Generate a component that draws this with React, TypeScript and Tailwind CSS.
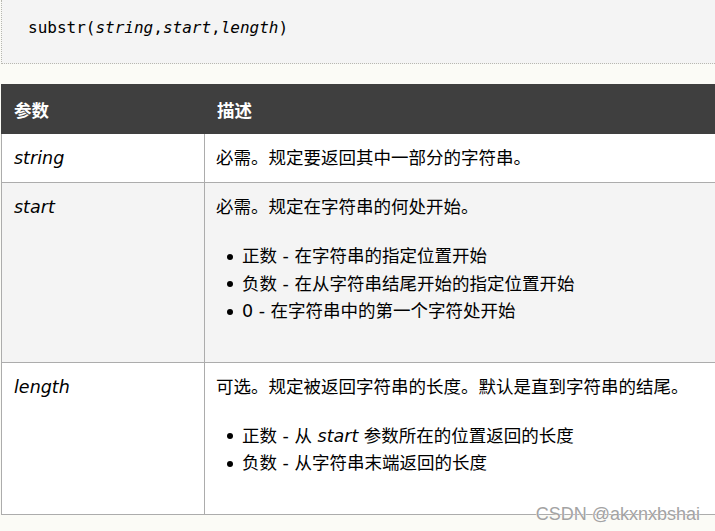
import React from "react";

const FONT = { fontFamily: '"DejaVu Sans", "Noto Sans CJK SC", sans-serif' };

function Bullet({ children }: { children: React.ReactNode }) {
  return (
    <li className="flex items-center leading-[27.5px]">
      <span className="ml-[11px] mr-[9px] h-[6px] w-[6px] shrink-0 rounded-full bg-black" />
      <span>{children}</span>
    </li>
  );
}

export default function App() {
  return (
    <div
      className="relative min-h-[531px] w-[715px] overflow-hidden bg-[#fbfbf6] pl-px text-[17.5px] text-black"
      style={FONT}
    >
      <div
        className="h-[64px] border-b border-l border-dotted border-[#b8b8b0] bg-[#f4f4f4] pl-[26px] pt-[18px] text-[16px] leading-[20px]"
        style={{ fontFamily: '"DejaVu Sans Mono", "Liberation Mono", monospace' }}
      >
        substr(<i>string</i>,<i>start</i>,<i>length</i>)
      </div>

      <div className="mt-[20px]">
        <div className="flex h-[50px] bg-[#3f3f3f] font-bold text-white leading-[27px]">
          <div className="w-[204px] pl-[13px] pt-[14px]">参数</div>
          <div className="flex-1 pl-[12px] pt-[14px]">描述</div>
        </div>

        <div className="flex border-b border-l border-[#acacac] bg-white leading-[27px]">
          <div className="w-[203px] shrink-0 border-r border-[#acacac] pb-[10px] pl-[12px] pt-[11px] italic">
            string
          </div>
          <div className="flex-1 pb-[10px] pl-[11px] pt-[11px]">必需。规定要返回其中一部分的字符串。</div>
        </div>

        <div className="flex border-b border-l border-[#acacac] bg-[#f4f4f4] leading-[27px]">
          <div className="w-[203px] shrink-0 border-r border-[#acacac] pl-[12px] pt-[11px] italic">start</div>
          <div className="flex-1 pb-[10px] pl-[11px] pt-[11px]">
            <p>必需。规定在字符串的何处开始。</p>
            <ul className="mb-[26px] mt-[22px]">
              <Bullet>正数 - 在字符串的指定位置开始</Bullet>
              <Bullet>负数 - 在从字符串结尾开始的指定位置开始</Bullet>
              <Bullet>0 - 在字符串中的第一个字符处开始</Bullet>
            </ul>
          </div>
        </div>

        <div className="flex border-b border-l border-[#acacac] bg-white leading-[27px]">
          <div className="w-[203px] shrink-0 border-r border-[#acacac] pl-[12px] pt-[11px] italic">length</div>
          <div className="flex-1 pb-[10px] pl-[11px] pt-[11px]">
            <p>可选。规定被返回字符串的长度。默认是直到字符串的结尾。</p>
            <ul className="mb-[26px] mt-[22px]">
              <Bullet>
                正数 - 从 <i>start</i> 参数所在的位置返回的长度
              </Bullet>
              <Bullet>负数 - 从字符串末端返回的长度</Bullet>
            </ul>
          </div>
        </div>
      </div>

      <div
        className="absolute right-[15px] top-[503px] text-[18px] leading-[22px] text-[#a3a3a3]"
        style={{
          fontFamily: '"Liberation Sans", Arial, sans-serif',
          textShadow: "0 0 1px #fff, 0 0 1px #fff",
        }}
      >
        CSDN @akxnxbshai
      </div>
    </div>
  );
}
